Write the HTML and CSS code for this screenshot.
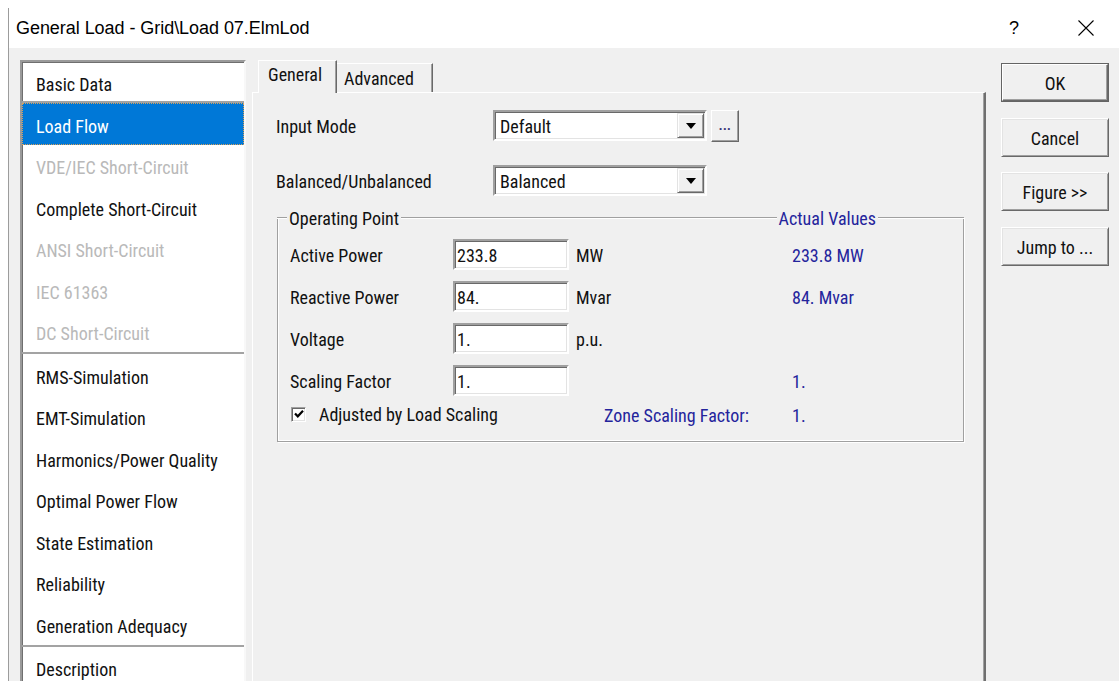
FILE: index.html
```html
<!DOCTYPE html>
<html lang="en">
<head>
<meta charset="utf-8">
<title>General Load - Grid\Load 07.ElmLod</title>
<link rel="stylesheet" href="styles.css">
</head>
<body>
<div class="window">
  <header class="titlebar">
    <span class="title">General Load - Grid\Load 07.ElmLod</span>
    <span class="help">?</span>
    <span class="close">
      <svg width="16" height="16" viewBox="0 0 16 16"><path d="M0.5 0.5 L15.5 15.5 M15.5 0.5 L0.5 15.5" stroke="#000" stroke-width="1.1" fill="none"/></svg>
    </span>
  </header>

  <div class="body">
    <nav class="pages">
      <div class="pgroup">
        <div class="item first">Basic Data</div>
      </div>
      <div class="pgroup sep">
        <div class="item sel">Load Flow</div>
        <div class="item off">VDE/IEC Short-Circuit</div>
        <div class="item">Complete Short-Circuit</div>
        <div class="item off">ANSI Short-Circuit</div>
        <div class="item off">IEC 61363</div>
        <div class="item off">DC Short-Circuit</div>
      </div>
      <div class="pgroup sep">
        <div class="item">RMS-Simulation</div>
        <div class="item">EMT-Simulation</div>
        <div class="item">Harmonics/Power Quality</div>
        <div class="item">Optimal Power Flow</div>
        <div class="item">State Estimation</div>
        <div class="item">Reliability</div>
        <div class="item">Generation Adequacy</div>
      </div>
      <div class="pgroup sep">
        <div class="item">Description</div>
      </div>
    </nav>

    <section class="tabs">
      <div class="tabstrip">
        <div class="tab active">General</div>
        <div class="tab">Advanced</div>
      </div>
      <div class="tabpage">
        <div class="frow">
          <span class="flabel">Input Mode</span>
          <div class="combo">
            <span class="cval">Default</span>
            <span class="cbtn"><span class="arrow"></span></span>
          </div>
          <span class="dots">...</span>
        </div>
        <div class="frow second">
          <span class="flabel">Balanced/Unbalanced</span>
          <div class="combo">
            <span class="cval">Balanced</span>
            <span class="cbtn"><span class="arrow"></span></span>
          </div>
        </div>

        <div class="ghead">
          <span class="gline lead"></span>
          <span class="gtitle">Operating Point</span>
          <span class="gline fill"></span>
          <span class="gtitle blue">Actual Values</span>
          <span class="gline tail"></span>
        </div>
        <div class="gbox">
          <div class="ggrid">
            <span class="lbl">Active Power</span>
            <span class="field">233.8</span>
            <span class="unit">MW</span>
            <span class="act">233.8 MW</span>

            <span class="lbl">Reactive Power</span>
            <span class="field">84.</span>
            <span class="unit">Mvar</span>
            <span class="act">84. Mvar</span>

            <span class="lbl">Voltage</span>
            <span class="field">1.</span>
            <span class="unit">p.u.</span>
            <span class="act"></span>

            <span class="lbl">Scaling Factor</span>
            <span class="field">1.</span>
            <span class="unit"></span>
            <span class="act">1.</span>

            <span class="check">
              <span class="box"><svg width="10" height="10" viewBox="0 0 10 10"><path d="M1 4.5 L3.8 7.3 L9 1.8" stroke="#000" stroke-width="2.2" fill="none"/></svg></span>
              <span>Adjusted by Load Scaling</span>
            </span>
            <span class="zone">Zone Scaling Factor:</span>
            <span class="act">1.</span>
          </div>
        </div>
      </div>
    </section>

    <aside class="actions">
      <span class="btn default"><span class="btn-in">OK</span></span>
      <span class="btn">Cancel</span>
      <span class="btn">Figure &gt;&gt;</span>
      <span class="btn">Jump to ...</span>
    </aside>
  </div>
</div>
</body>
</html>
```

FILE: styles.css
```css
html, body {
  margin: 0;
  padding: 0;
}

body {
  width: 1119px;
  height: 681px;
  overflow: hidden;
  background: #fff;
  font-family: "Roboto Condensed", "Liberation Sans", sans-serif;
  font-size: 18px;
  color: #111;
}

.window {
  margin: 8px 0 0 8px;
  border-left: 1px solid #9c9c9c;
  height: 673px;
  display: flex;
  flex-direction: column;
}

/* caption bar */
.titlebar {
  height: 40px;
  flex: none;
  display: flex;
  align-items: center;
  padding-left: 7px;
  background: #fff;
  font-family: "Liberation Sans", sans-serif;
  font-size: 18px;
  color: #000;
}

.title {
  flex: 1;
  letter-spacing: -0.05px;
}

.help {
  width: 12px;
  font-size: 18px;
  margin-right: 57px;
}

.close {
  width: 16px;
  height: 16px;
  margin-right: 25px;
  display: flex;
}

/* client area */
.body {
  flex: 1;
  background: #f0f0f0;
  display: flex;
  align-items: flex-start;
  padding: 12px 0 0 11px;
  overflow: hidden;
}

/* page list on the left */
.pages {
  flex: none;
  width: 222px;
  height: 640px;
  background: #fff;
  border: 2px solid;
  border-color: #9a9a9a #f8f8f8 #f8f8f8 #9a9a9a;
  box-shadow: inset 1px 1px 0 #6f6f6f;
}

.pgroup.sep {
  border-top: 2px solid #a3a3a3;
}

.item {
  height: 41.5px;
  box-sizing: border-box;
  padding: 5px 0 0 14px;
  display: flex;
  align-items: center;
  white-space: nowrap;
}

.item.first {
  height: 39px;
}

.item.sel {
  background: #0078d7;
  color: #fff;
  outline: 1px dotted #d9a15a;
  outline-offset: -1px;
}

.item.off {
  color: #b9b9b9;
}

/* tab control */
.tabs {
  flex: none;
  width: 734px;
  margin-left: 6px;
  display: flex;
  flex-direction: column;
}

.tabstrip {
  height: 32px;
  display: flex;
  align-items: flex-end;
  padding-left: 6px;
}

.tab {
  box-sizing: border-box;
  height: 29px;
  padding: 4px 0 0 7px;
  width: 96px;
  background: #f0f0f0;
  border-top: 1px solid #fff;
  border-right: 1px solid #696969;
  box-shadow: inset -1px 0 0 #a0a0a0;
  white-space: nowrap;
}

.tab.active {
  position: relative;
  z-index: 1;
  height: 33px;
  width: 79px;
  margin-bottom: -1px;
  padding: 3px 0 0 9px;
  border-left: 1px solid #fff;
}

.tabpage {
  height: 600px;
  background: #f0f0f0;
  border-top: 1px solid #fff;
  border-left: 1px solid #fff;
  border-right: 2px solid #6f6f6f;
  box-shadow: inset -1px 0 0 #a0a0a0;
  padding: 17px 0 0 23px;
}

.frow {
  height: 31px;
  display: flex;
  align-items: center;
}

.frow.second {
  margin-top: 24px;
}

.flabel {
  width: 217px;
  flex: none;
  padding-top: 1px;
}

/* sunken edit and combo boxes */
.combo,
.field {
  box-sizing: border-box;
  height: 31px;
  background: #fff;
  border: 2px solid;
  border-color: #a0a0a0 #fff #fff #a0a0a0;
  box-shadow: inset 1px 1px 0 #696969, inset -1px -1px 0 #e3e3e3;
}

.combo {
  width: 214px;
  display: flex;
  align-items: center;
  padding: 0 1px 0 5px;
}

.cval {
  flex: 1;
  padding-top: 2px;
}

.cbtn {
  box-sizing: border-box;
  width: 27px;
  height: 25px;
  background: #f0f0f0;
  border: 1px solid;
  border-color: #e3e3e3 #696969 #696969 #e3e3e3;
  box-shadow: inset 1px 1px 0 #fff, inset -1px -1px 0 #a0a0a0;
  display: flex;
  align-items: center;
  justify-content: center;
}

.arrow {
  width: 0;
  height: 0;
  border-left: 5px solid transparent;
  border-right: 5px solid transparent;
  border-top: 6px solid #000;
}

.dots {
  box-sizing: border-box;
  margin-left: 4px;
  width: 28px;
  height: 32px;
  background: #f0f0f0;
  border: 1px solid;
  border-color: #fff #696969 #696969 #fff;
  box-shadow: inset -1px -1px 0 #a0a0a0;
  font-family: "Liberation Sans", sans-serif;
  font-size: 13px;
  font-weight: bold;
  color: #3a3a7a;
  display: flex;
  justify-content: center;
  align-items: flex-end;
  padding-bottom: 8px;
  letter-spacing: 0.5px;
}

/* group box */
.ghead {
  margin: 12px 20px 0 1px;
  height: 20px;
  display: flex;
  align-items: center;
}

.gline {
  height: 0;
  border-top: 1px solid #a0a0a0;
  border-bottom: 1px solid #fff;
}

.gline.lead {
  width: 10px;
}

.gline.fill {
  flex: 1;
}

.gline.tail {
  width: 86px;
}

.gtitle {
  padding: 0 2px 0 2px;
  white-space: nowrap;
}

.blue,
.act,
.zone {
  color: #24249c;
}

.gbox {
  margin: -11px 20px 0 1px;
  height: 225px;
  box-sizing: border-box;
  border: 1px solid #a0a0a0;
  border-top: none;
  box-shadow: 1px 1px 0 #fff, inset 1px -1px 0 #fff;
  padding: 22px 0 0 12px;
}

.ggrid {
  display: grid;
  grid-template-columns: 163px 116px 223px 1fr;
  grid-template-rows: 31px 31px 31px 31px 14px;
  row-gap: 11px;
  align-items: center;
}

.lbl,
.unit,
.act {
  padding-top: 2px;
}

.field {
  display: flex;
  align-items: center;
  padding: 2px 0 0 2px;
}

.unit {
  padding-left: 7px;
}

.check {
  grid-column: 1 / 3;
  display: flex;
  align-items: center;
  gap: 13px;
  padding-left: 1px;
}

.box {
  box-sizing: border-box;
  width: 15px;
  height: 15px;
  background: #fff;
  border: 1px solid;
  border-color: #a0a0a0 #fff #fff #a0a0a0;
  box-shadow: inset 1px 1px 0 #696969, inset -1px -1px 0 #e3e3e3;
  display: flex;
  align-items: center;
  justify-content: center;
}

.zone {
  padding-left: 35px;
  padding-top: 2px;
}

/* dialog buttons */
.actions {
  flex: none;
  margin-left: 15px;
  padding-top: 3px;
  width: 108px;
  display: flex;
  flex-direction: column;
  gap: 15.5px;
}

.btn {
  box-sizing: border-box;
  height: 39px;
  background: #f0f0f0;
  border: 1px solid;
  border-color: #fff #696969 #696969 #fff;
  box-shadow: inset 1px 1px 0 #e3e3e3, inset -1px -1px 0 #a0a0a0;
  display: flex;
  align-items: center;
  justify-content: center;
  padding-top: 2px;
}

.btn.default {
  border: 1px solid #646464;
  box-shadow: none;
  padding: 0;
  align-items: stretch;
  justify-content: stretch;
}

.btn-in {
  flex: 1;
  border: 1px solid;
  border-color: #fff #696969 #696969 #fff;
  box-shadow: inset -1px -1px 0 #a0a0a0;
  display: flex;
  align-items: center;
  justify-content: center;
  padding-top: 2px;
}
```
